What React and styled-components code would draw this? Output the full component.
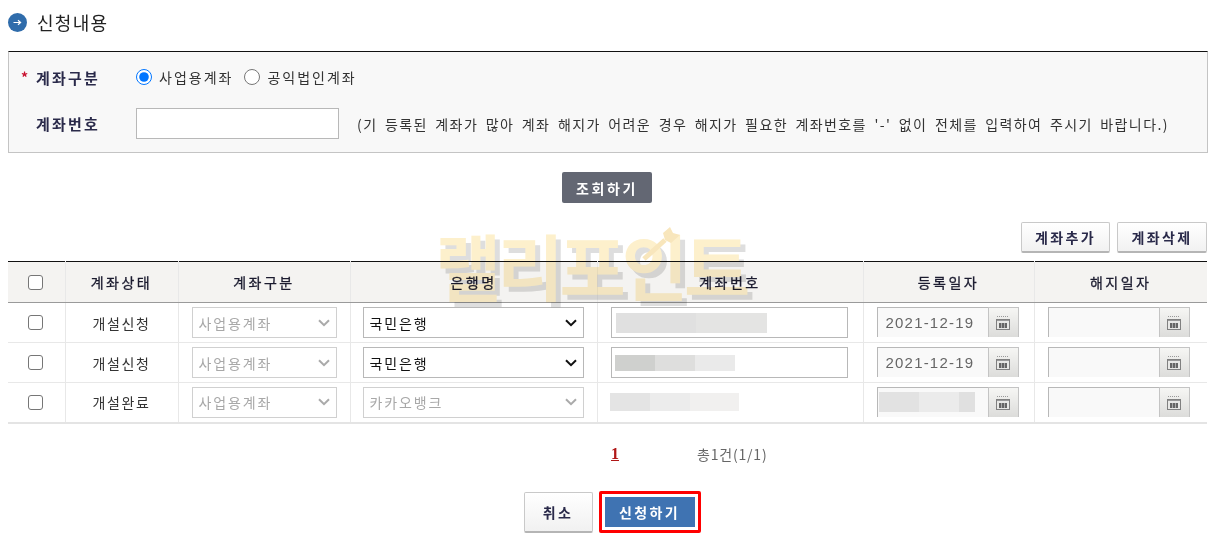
import React from "react";
import styled, { createGlobalStyle } from "styled-components";

/* ---------------------------------- Global --------------------------------- */

const GlobalStyle = createGlobalStyle`
  html, body {
    margin: 0;
    padding: 0;
    background: #fff;
  }
  body {
    font-family: "Noto Sans CJK KR", "Noto Sans", sans-serif;
    color: #333;
  }
`;

const mainColor = "#2a2a4a";

const chevron = (color) =>
  `url("data:image/svg+xml,%3Csvg xmlns='http://www.w3.org/2000/svg' width='12' height='8' viewBox='0 0 12 8'%3E%3Cpath d='M1 1.2l5 5 5-5' fill='none' stroke='${color}' stroke-width='2'/%3E%3C/svg%3E")`;

/* --------------------------------- Styled ---------------------------------- */

const Page = styled.div`
  width: 1217px;
  height: 541px;
  overflow: hidden;
  padding: 9px 9px 0 8px;
  box-sizing: border-box;
`;

const TitleRow = styled.div`
  display: flex;
  align-items: center;
  gap: 10px;
  height: 26px;
  margin-bottom: 16px;
`;

const TitleText = styled.h2`
  margin: 0;
  font-size: 18px;
  font-weight: 400;
  letter-spacing: 1.3px;
  line-height: 26px;
  color: #222;
`;

const FilterPanel = styled.div`
  height: 102px;
  box-sizing: border-box;
  background: #f8f8f8;
  border: 1px solid #c4c4c4;
  border-top: 1px solid #111;
  padding: 12px 12px 0 12px;
`;

const FilterRow = styled.div`
  display: flex;
  align-items: center;
  height: ${(p) => p.$height}px;
  margin-bottom: ${(p) => p.$gap || 0}px;
`;

const Star = styled.span`
  width: 15px;
  color: #c8102e;
  font-size: 14px;
  font-weight: 700;
`;

const FilterLabel = styled.span`
  width: 100px;
  font-size: 15px;
  font-weight: 700;
  letter-spacing: 2.2px;
  color: ${mainColor};
`;

const RadioLabel = styled.label`
  display: flex;
  align-items: center;
  gap: 7px;
  margin-right: 11px;
  font-size: 14px;
  letter-spacing: 2px;
  color: #333;
`;

const Radio = styled.input`
  width: 16px;
  height: 16px;
  margin: 0;
`;

const AccountInput = styled.input`
  width: 203px;
  height: 31px;
  box-sizing: border-box;
  border: 1px solid #b8b8b8;
  background: #fff;
  padding: 0 6px;
`;

const Notice = styled.span`
  margin-left: 18px;
  font-size: 14px;
  letter-spacing: 1.4px;
  word-spacing: 3px;
  white-space: nowrap;
  color: #333;
`;

const SearchRow = styled.div`
  display: flex;
  justify-content: center;
  margin-top: 19px;
  padding-right: 2px;
`;

const DarkButton = styled.button`
  width: 90px;
  height: 31px;
  border: 0;
  border-radius: 2px;
  background: #636773;
  color: #fff;
  font: 700 14px "Noto Sans CJK KR", sans-serif;
  letter-spacing: 2.6px;
  padding: 0;
`;

const ActionRow = styled.div`
  display: flex;
  justify-content: flex-end;
  gap: 7px;
  margin: 19px 1px 8px 0;
`;

const GreyButton = styled.button`
  width: ${(p) => p.$width}px;
  height: ${(p) => p.$height || 31}px;
  margin-top: ${(p) => p.$top || 0}px;
  box-sizing: border-box;
  border: 1px solid #c9c9c9;
  border-bottom: 2px solid #b5b5b5;
  border-radius: 2px;
  background: linear-gradient(#fff, #f1f1f1);
  color: ${mainColor};
  font: 700 14px "Noto Sans CJK KR", sans-serif;
  letter-spacing: 2.4px;
  padding: 0;
`;

const TableWrap = styled.div`
  position: relative;
  width: 1199px;
`;

const Table = styled.table`
  width: 1199px;
  table-layout: fixed;
  border-collapse: collapse;
  border-top: 1px solid #111;
  border-bottom: 2px solid #e4e4e4;
`;

const HeadCell = styled.th`
  height: 40px;
  padding: 0;
  background: #f4f3f1;
  border-bottom: 1px solid #9a9a9a;
  border-left: 1px solid #e8e8e8;
  font-size: 14px;
  font-weight: 400;
  letter-spacing: 2.5px;
  color: #1c1c30;
  -webkit-text-stroke: ${(p) => (p.$bold ? "0.3px" : "0")};
  &:first-child {
    border-left: 0;
  }
`;

const Row = styled.tr`
  height: 40px;
  & + & td {
    border-top: 1px solid #e8e8e8;
  }
`;

const Cell = styled.td`
  padding: 0 0 0 ${(p) => p.$left || 0}px;
  border-left: 1px solid #e8e8e8;
  text-align: ${(p) => p.$align || "left"};
  font-size: 14px;
  letter-spacing: 1.6px;
  color: #333;
  vertical-align: middle;
  &:first-child {
    border-left: 0;
  }
`;

const Check = styled.input`
  appearance: none;
  display: block;
  width: 15px;
  height: 15px;
  box-sizing: border-box;
  margin: 0 auto 0 20px;
  border: 1px solid #767676;
  border-radius: 3px;
  background: #fff;
`;

const Select = styled.select`
  appearance: none;
  display: block;
  width: ${(p) => p.$width}px;
  height: 31px;
  box-sizing: border-box;
  border: 1px solid #b8b8b8;
  border-radius: 0;
  background: #fff ${chevron("%23111")} no-repeat right 6px center;
  padding: 0 20px 0 6px;
  font: 14px "Noto Sans CJK KR", sans-serif;
  letter-spacing: 1.9px;
  color: #111;
  &:disabled {
    border-color: #d0d0d0;
    background-image: ${chevron("%23aaa")};
    color: #a8a8a8;
    opacity: 1;
  }
`;

const NumberBox = styled.div`
  display: flex;
  align-items: center;
  width: 237px;
  height: 31px;
  box-sizing: border-box;
  border: 1px solid #b8b8b8;
  padding-left: ${(p) => p.$pad}px;
`;

const Blur = styled.div`
  display: flex;
  margin-left: ${(p) => p.$offset || 0}px;
`;

const BlurPart = styled.span`
  display: block;
  width: ${(p) => p.$width}px;
  height: ${(p) => p.$height}px;
  background: ${(p) => p.$color};
`;

const DateGroup = styled.div`
  display: flex;
  height: 30px;
  width: 142px;
  margin-bottom: 1px;
`;

const DateValue = styled.div`
  display: flex;
  align-items: center;
  flex: 1;
  box-sizing: border-box;
  background: #f9f9f9;
  border: 1px solid #b8b8b8;
  border-width: 1px 0 0 1px;
  padding-left: ${(p) => (p.$blurred ? 1 : 8)}px;
  font: 15px "Liberation Sans", sans-serif;
  letter-spacing: 1.2px;
  color: #666;
`;

const CalendarButton = styled.div`
  display: flex;
  align-items: center;
  justify-content: center;
  width: 31px;
  box-sizing: border-box;
  border: 1px solid #c4c4c4;
  border-bottom: 0;
  background: linear-gradient(#f6f6f4, #dcdcda);
`;

const Watermark = styled.div`
  position: absolute;
  left: 427px;
  top: -42px;
  font-size: 72px;
  font-weight: 700;
  line-height: 90px;
  letter-spacing: -4px;
  white-space: nowrap;
  color: #fdf0cc;
  text-shadow: 5px 5px 0 #dedede;
  mix-blend-mode: multiply;
  pointer-events: none;
`;

const TargetMark = styled.svg`
  position: absolute;
  left: 203px;
  top: 4px;
`;

const Pager = styled.div`
  display: flex;
  align-items: center;
  height: 20px;
  margin-top: 20px;
  padding-left: 603px;
`;

const PageLink = styled.a`
  width: 86px;
  font: 700 16px "Liberation Serif", serif;
  color: #b01818;
  text-decoration: underline;
`;

const PageInfo = styled.span`
  font-size: 14px;
  letter-spacing: 0.8px;
  color: #666;
`;

const BottomRow = styled.div`
  display: flex;
  justify-content: center;
  align-items: flex-start;
  gap: 6px;
  margin-top: 27px;
  padding-left: 8px;
`;

const SubmitFrame = styled.div`
  border: 3px solid #ff0000;
  border-radius: 2px;
  background: #fff;
  padding: 3px;
`;

const SubmitButton = styled.button`
  display: block;
  width: 90px;
  height: 30px;
  border: 0;
  background: #3f73b2;
  color: #fff;
  font: 700 14px "Noto Sans CJK KR", sans-serif;
  letter-spacing: 2.4px;
  padding: 0;
`;

/* ---------------------------------- Icons ---------------------------------- */

function ArrowBadge() {
  return (
    <svg width="19" height="19" viewBox="0 0 19 19">
      <circle cx="9.5" cy="9.5" r="9.5" fill="#2f6cab" />
      <path d="M5.5 9.5h7M10 7.2l2.6 2.3L10 11.8" fill="none" stroke="#fff" strokeWidth="1.2" />
    </svg>
  );
}

function CalendarIcon() {
  return (
    <svg width="14" height="15" viewBox="0 0 14 15">
      <path d="M1 1.5h12" stroke="#999" strokeWidth="1" strokeDasharray="1 1" />
      <rect x="0.5" y="4.5" width="13" height="10" fill="#e8e8e6" stroke="#808080" />
      <rect x="1" y="5" width="12" height="1" fill="#999" />
      <rect x="3" y="8" width="8" height="5" fill="#666" />
      <path d="M5.5 8v5M8.5 8v5" stroke="#aaa" strokeWidth="1" />
    </svg>
  );
}

/* ----------------------------------- Data ---------------------------------- */

const rows = [
  {
    status: "개설신청",
    bank: "국민은행",
    locked: false,
    blur: { pad: 4, height: 20, parts: [[80, "#e0e0e0"], [71, "#e4e4e3"]] },
    date: "2021-12-19",
  },
  {
    status: "개설신청",
    bank: "국민은행",
    locked: false,
    blur: { pad: 3, height: 16, parts: [[40, "#cfd0ce"], [40, "#dededd"], [40, "#eaeaea"]] },
    date: "2021-12-19",
  },
  {
    status: "개설완료",
    bank: "카카오뱅크",
    locked: true,
    blur: { offset: -1, height: 18, parts: [[40, "#e4e4e4"], [40, "#ececec"], [49, "#f1f0ef"]] },
    date: null,
  },
];

const headers = ["계좌상태", "계좌구분", "은행명", "계좌번호", "등록일자", "해지일자"];
const colWidths = [57, 113, 172, 247, 266, 171, 173];

function BlurBlock({ height, parts, offset }) {
  return (
    <Blur $offset={offset}>
      {parts.map(([width, color]) => (
        <BlurPart key={color} $width={width} $height={height} $color={color} />
      ))}
    </Blur>
  );
}

/* -------------------------------- Rendering -------------------------------- */

function App() {
  return (
    <>
      <GlobalStyle />
      <Page>
        <TitleRow>
          <ArrowBadge />
          <TitleText>신청내용</TitleText>
        </TitleRow>

        <FilterPanel>
          <FilterRow $height={26} $gap={18}>
            <Star>*</Star>
            <FilterLabel>계좌구분</FilterLabel>
            <RadioLabel>
              <Radio type="radio" name="kind" defaultChecked />
              사업용계좌
            </RadioLabel>
            <RadioLabel>
              <Radio type="radio" name="kind" />
              공익법인계좌
            </RadioLabel>
          </FilterRow>
          <FilterRow $height={31}>
            <Star />
            <FilterLabel>계좌번호</FilterLabel>
            <AccountInput type="text" />
            <Notice>
              (기 등록된 계좌가 많아 계좌 해지가 어려운 경우 해지가 필요한 계좌번호를 '-' 없이 전체를 입력하여 주시기 바랍니다.)
            </Notice>
          </FilterRow>
        </FilterPanel>

        <SearchRow>
          <DarkButton>조회하기</DarkButton>
        </SearchRow>

        <ActionRow>
          <GreyButton $width={89}>계좌추가</GreyButton>
          <GreyButton $width={90}>계좌삭제</GreyButton>
        </ActionRow>

        <TableWrap>
          <Table>
            <colgroup>
              {colWidths.map((w, i) => (
                <col key={i} style={{ width: w }} />
              ))}
            </colgroup>
            <thead>
              <tr>
                <HeadCell>
                  <Check type="checkbox" />
                </HeadCell>
                {headers.map((h) => (
                  <HeadCell key={h} $bold>
                    {h}
                  </HeadCell>
                ))}
              </tr>
            </thead>
            <tbody>
              {rows.map((row, i) => (
                <Row key={i}>
                  <Cell>
                    <Check type="checkbox" />
                  </Cell>
                  <Cell $align="center">{row.status}</Cell>
                  <Cell $left={13}>
                    <Select $width={145} disabled defaultValue="사업용계좌">
                      <option>사업용계좌</option>
                    </Select>
                  </Cell>
                  <Cell $left={12}>
                    <Select $width={221} disabled={row.locked} defaultValue={row.bank}>
                      <option>{row.bank}</option>
                    </Select>
                  </Cell>
                  <Cell $left={13}>
                    {row.locked ? (
                      <BlurBlock {...row.blur} />
                    ) : (
                      <NumberBox $pad={row.blur.pad}>
                        <BlurBlock {...row.blur} />
                      </NumberBox>
                    )}
                  </Cell>
                  <Cell $left={13}>
                    <DateGroup>
                      <DateValue $blurred={!row.date}>
                        {row.date || (
                          <BlurBlock
                            height={20}
                            parts={[[40, "#e2e2e2"], [40, "#ebebeb"], [16, "#e0e0e0"]]}
                          />
                        )}
                      </DateValue>
                      <CalendarButton>
                        <CalendarIcon />
                      </CalendarButton>
                    </DateGroup>
                  </Cell>
                  <Cell $left={13}>
                    <DateGroup>
                      <DateValue />
                      <CalendarButton>
                        <CalendarIcon />
                      </CalendarButton>
                    </DateGroup>
                  </Cell>
                </Row>
              ))}
            </tbody>
          </Table>

          <Watermark>
            랠리포인트
            <TargetMark width="50" height="45" viewBox="0 0 50 45">
              <path d="M27 17L6 36" stroke="#f8e6bc" strokeWidth="5" />
              <path d="M25 10l7-6 3 6 7 2-9 8-6-3z" fill="#f8e6bc" />
            </TargetMark>
          </Watermark>
        </TableWrap>

        <Pager>
          <PageLink>1</PageLink>
          <PageInfo>총1건(1/1)</PageInfo>
        </Pager>

        <BottomRow>
          <GreyButton $width={69} $height={41} $top={1}>
            취소
          </GreyButton>
          <SubmitFrame>
            <SubmitButton>신청하기</SubmitButton>
          </SubmitFrame>
        </BottomRow>
      </Page>
    </>
  );
}

export default App;
